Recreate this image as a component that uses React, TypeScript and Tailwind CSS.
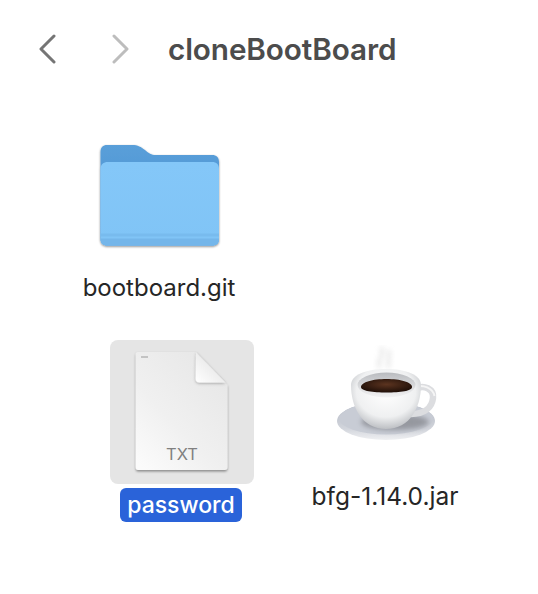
import React from "react";

function Folder() {
  return (
    <svg width="124" height="106" viewBox="98 143 124 106" className="block">
      <defs>
        <linearGradient id="fb" x1="0" y1="0" x2="0" y2="1">
          <stop offset="0" stopColor="#5a9fd9" />
          <stop offset="1" stopColor="#448bcf" />
        </linearGradient>
        <linearGradient id="ff" x1="0" y1="0" x2="0" y2="1">
          <stop offset="0" stopColor="#84c7f8" />
          <stop offset="1" stopColor="#80c4f6" />
        </linearGradient>
        <filter id="fs" x="-10%" y="-10%" width="120%" height="120%">
          <feDropShadow dx="0" dy="1" stdDeviation="0.800" floodColor="#000" floodOpacity="0.45" />
        </filter>
      </defs>
      <g filter="url(#fs)">
        <path d="M107 145H132C138 145 141 147 145 150C149 153.500 151 155 156 155H212C216.500 155 219 157.500 219 162V238.500C219 243.500 216.500 245.500 212 245.500H107.500C103 245.500 100.500 243.500 100.500 238.500V152C100.500 147.500 103 145 107 145Z" fill="url(#fb)" />
        <path d="M108 162H212C216.500 162 219 164.500 219 169V238.500C219 243.500 216.500 245.500 212 245.500H107.500C103 245.500 100.500 243.500 100.500 238.500V169C100.500 164.500 103.500 162 108 162Z" fill="url(#ff)" />
      </g>
      <path d="M100.500 233.500H219V236.500H100.500Z" fill="#78bbee" />
      <path d="M100.500 238.500H219C219 243.500 216.500 245.500 212 245.500H107.500C103 245.500 100.500 243.500 100.500 238.500Z" fill="#74b6ea" />
    </svg>
  );
}

function TextFile() {
  return (
    <svg width="100" height="126" viewBox="132 349 100 126" className="block">
      <defs>
        <linearGradient id="pg" x1="0.9" y1="0" x2="0.1" y2="1">
          <stop offset="0" stopColor="#e6e6e6" />
          <stop offset="0.6" stopColor="#f0f0f0" />
          <stop offset="1" stopColor="#fbfbfb" />
        </linearGradient>
        <linearGradient id="fg" x1="0" y1="1" x2="1" y2="0">
          <stop offset="0" stopColor="#ffffff" />
          <stop offset="1" stopColor="#dcdcdc" />
        </linearGradient>
        <filter id="ps" x="-10%" y="-10%" width="120%" height="120%">
          <feDropShadow dx="0" dy="1.500" stdDeviation="1.200" floodColor="#000" floodOpacity="0.4" />
        </filter>
        <filter id="fo" x="-30%" y="-30%" width="160%" height="160%">
          <feDropShadow dx="0" dy="1" stdDeviation="1.500" floodColor="#000" floodOpacity="0.3" />
        </filter>
      </defs>
      <path filter="url(#ps)" d="M138 352H196L227.500 385V467C227.500 469 226.500 470 224.500 470H138C136.500 470 135.700 469 135.700 467V354.500C135.700 353 136.500 352 138 352Z" fill="url(#pg)" />
      <path filter="url(#fo)" d="M196 352.500L225.500 382.500H199.500C197 382.500 195.700 381 195.700 379Z" fill="url(#fg)" />
      <rect x="141" y="356.500" width="7" height="1" fill="#9a9a9a" />
    </svg>
  );
}

function Cup() {
  return (
    <svg width="110" height="100" viewBox="332 345 110 100" className="block">
      <defs>
        <radialGradient id="cb" cx="0.5" cy="0.38" r="0.68">
          <stop offset="0" stopColor="#ffffff" />
          <stop offset="0.62" stopColor="#eff0f1" />
          <stop offset="1" stopColor="#aeb1b6" />
        </radialGradient>
        <linearGradient id="sa" x1="0" y1="0" x2="0" y2="1">
          <stop offset="0" stopColor="#b0b6c2" />
          <stop offset="0.7" stopColor="#d2d5dc" />
          <stop offset="1" stopColor="#eff0f2" />
        </linearGradient>
        <linearGradient id="ri" x1="0" y1="0" x2="0" y2="1">
          <stop offset="0" stopColor="#b9bbbf" />
          <stop offset="1" stopColor="#f3f3f4" />
        </linearGradient>
        <radialGradient id="co" cx="0.5" cy="0.4" r="0.6">
          <stop offset="0" stopColor="#5c3420" />
          <stop offset="1" stopColor="#1f0f08" />
        </radialGradient>
        <filter id="bl" x="-50%" y="-50%" width="200%" height="200%">
          <feGaussianBlur stdDeviation="2.500" />
        </filter>
        <filter id="bs" x="-50%" y="-50%" width="200%" height="200%">
          <feGaussianBlur stdDeviation="2.500" />
        </filter>
      </defs>
      <path d="M380 368C375 360 386 356 381 347M389 368C386 361 392 356 388 350" stroke="#dddddd" strokeWidth="4" fill="none" filter="url(#bs)" opacity="0.6" />
      <ellipse cx="386" cy="421" rx="49" ry="19" fill="url(#sa)" />
      <ellipse cx="386" cy="418.500" rx="47" ry="16" fill="#c8ccd5" />
      <ellipse cx="395" cy="422" rx="34" ry="8" fill="#85878e" filter="url(#bl)" opacity="0.75" />
      <path d="M415 389C424 384 434 389 433 398C432 408 424 414 411 414" fill="none" stroke="#dcdde0" strokeWidth="6.500" />
      <path d="M415 387C423 384 433 388 434.500 396" fill="none" stroke="#f5f5f5" strokeWidth="2" />
      <path d="M351 385C351 375 366 369 386 369C406 369 421 375 421 385C421 407 410 429 386 429C362 429 351 407 351 385Z" fill="url(#cb)" />
      <ellipse cx="386.500" cy="385" rx="29" ry="12.500" fill="url(#ri)" />
      <path d="M361 387C361 382 373 379 386.500 379C400 379 412 382 412 387C412 391 400 392.500 386.500 392.500C373 392.500 361 391 361 387Z" fill="url(#co)" />
    </svg>
  );
}

export default function App() {
  const sans = "font-['Inter','Liberation_Sans',sans-serif]";
  return (
    <div className={`flex h-[594px] w-[538px] flex-col bg-white ${sans}`}>
      <header className="flex h-[63px] items-end pl-[38px]">
        <svg width="19" height="30" viewBox="0 0 19 30" className="mb-[-1px] block">
          <path d="M16 2L3 15L16 28" fill="none" stroke="#757575" strokeWidth="3" strokeLinecap="round" strokeLinejoin="round" />
        </svg>
        <svg width="19" height="30" viewBox="0 0 19 30" className="mb-[-1px] ml-[54px] block">
          <path d="M3 2L16 15L3 28" fill="none" stroke="#bdbdbd" strokeWidth="3" strokeLinecap="round" strokeLinejoin="round" />
        </svg>
        <h1 className="mb-[-3px] ml-[38px] text-[29.7px] leading-[34px] font-semibold tracking-[-0.1px] whitespace-nowrap text-[#4c4c4c]">cloneBootBoard</h1>
      </header>

      <section className="mt-[80px] ml-[98px] flex w-[124px] flex-col items-center self-start">
        <Folder />
        <p className="mt-[25px] mr-[2px] text-[24px] leading-[28px] whitespace-nowrap text-[#262626]">bootboard.git</p>
      </section>

      <section className="mt-[38px] flex items-start pl-[110px]">
        <div className="flex w-[144px] flex-col items-center">
          <div className="relative flex h-[144px] w-[144px] items-center justify-center rounded-[8px] bg-[#e5e5e5]">
            <TextFile />
            <span className="absolute top-[103px] left-0 w-full text-center text-[16.5px] leading-[22px] text-[#808080]">TXT</span>
          </div>
          <p className="mt-[4px] ml-[-2px] rounded-[6px] bg-[#2a63d9] px-[7px] pt-[1px] text-[23px] leading-[33px] font-medium text-white">password</p>
        </div>
        <div className="ml-[56px] flex w-[150px] flex-col items-center">
          <div className="mt-[5px] ml-[3px]">
            <Cup />
          </div>
          <p className="mt-[37px] text-[24.5px] leading-[28px] whitespace-nowrap text-[#262626]">bfg-1.14.0.jar</p>
        </div>
      </section>
    </div>
  );
}
